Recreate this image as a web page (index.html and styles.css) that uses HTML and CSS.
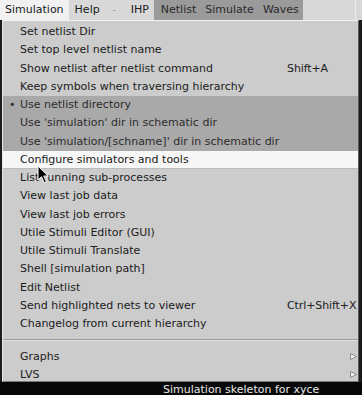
FILE: index.html
```html
<!DOCTYPE html>
<html lang="en">
<head>
    <meta charset="UTF-8">
    <title>Simulation menu</title>
    <link rel="stylesheet" href="styles.css">
</head>
<body>
    <div class="menubar">
        <span class="mb-item active">Simulation</span>
        <span class="mb-item help">Help</span>
        <span class="mb-item dash">-</span>
        <span class="mb-item ihp">IHP</span>
        <div class="mb-group">
            <span class="mb-item">Netlist</span>
            <span class="mb-item">Simulate</span>
            <span class="mb-item">Waves</span>
        </div>
        <div class="mb-rest"></div>
    </div>

    <div class="dropdown">
        <div class="row"><span class="lead"></span><span>Set netlist Dir</span><span></span></div>
        <div class="row"><span class="lead"></span><span>Set top level netlist name</span><span></span></div>
        <div class="row"><span class="lead"></span><span>Show netlist after netlist command</span><span class="acc">Shift+A</span></div>
        <div class="row"><span class="lead"></span><span>Keep symbols when traversing hierarchy</span><span></span></div>
        <div class="row dim"><span class="lead">•</span><span>Use netlist directory</span><span></span></div>
        <div class="row dim"><span class="lead"></span><span>Use 'simulation' dir in schematic dir</span><span></span></div>
        <div class="row dim"><span class="lead"></span><span>Use 'simulation/[schname]' dir in schematic dir</span><span></span></div>
        <div class="row hover"><span class="lead"></span><span>Configure simulators and tools</span><span></span></div>
        <div class="row"><span class="lead"></span><span>List running sub-processes</span><span></span></div>
        <div class="row"><span class="lead"></span><span>View last job data</span><span></span></div>
        <div class="row"><span class="lead"></span><span>View last job errors</span><span></span></div>
        <div class="row"><span class="lead"></span><span>Utile Stimuli Editor (GUI)</span><span></span></div>
        <div class="row"><span class="lead"></span><span>Utile Stimuli Translate</span><span></span></div>
        <div class="row"><span class="lead"></span><span>Shell [simulation path]</span><span></span></div>
        <div class="row"><span class="lead"></span><span>Edit Netlist</span><span></span></div>
        <div class="row"><span class="lead"></span><span>Send highlighted nets to viewer</span><span class="acc">Ctrl+Shift+X</span></div>
        <div class="row"><span class="lead"></span><span>Changelog from current hierarchy</span><span></span></div>
        <div class="separator"></div>
        <div class="row"><span class="lead"></span><span>Graphs</span><span class="cascade"><svg width="7" height="7" viewBox="0 0 7 7"><polygon points="0.5,0.5 6.5,3.5 0.5,6.5" fill="#f2f2f2" stroke="#8a8a8a" stroke-width="1"/></svg></span></div>
        <div class="row"><span class="lead"></span><span>LVS</span><span class="cascade"><svg width="7" height="7" viewBox="0 0 7 7"><polygon points="0.5,0.5 6.5,3.5 0.5,6.5" fill="#f2f2f2" stroke="#8a8a8a" stroke-width="1"/></svg></span></div>
    </div>

    <div class="statusbar">Simulation skeleton for xyce</div>

    <svg class="pointer" width="13" height="19" viewBox="0 0 13 19">
        <path d="M1,1 L1,15 L4.5,11.8 L7.2,17.8 L9.4,16.8 L6.8,11 L11.2,11 Z" fill="#000" stroke="#fff" stroke-width="1"/>
    </svg>
</body>
</html>
```

FILE: styles.css
```css
body {
    margin: 0;
    padding: 0;
    width: 362px;
    height: 395px;
    overflow: hidden;
    position: relative;
    background-color: #1c1c1c;
    font-family: 'DejaVu Sans', sans-serif;
    font-size: 11px;
    color: #202020;
}

.menubar {
    display: flex;
    height: 20px;
    line-height: 20px;
    background-color: #d8d8d8;
}

.mb-item {
    padding: 0 4.5px;
    white-space: nowrap;
}

.mb-item.active {
    padding: 0 5px;
    background-color: #f1f1f1;
}

.mb-item.help {
    padding-left: 6px;
}

.mb-item.dash {
    padding-left: 8px;
    color: #a0a0a0;
}

.mb-item.ihp {
    padding-left: 10px;
    padding-right: 5px;
}

.mb-group {
    display: flex;
    padding-left: 2.5px;
    background-color: #9a9a9a;
    color: #2a2a2a;
}

.mb-rest {
    flex: 1;
    border-right: 1px solid #ececec;
    margin-right: 6px;
    box-shadow: 6px 0 0 #d8d8d8;
}

.dropdown {
    margin-left: 2px;
    width: 357px;
    height: 362px;
    padding-top: 2px;
    box-sizing: border-box;
    background-color: #cccccc;
    border-top: 1px solid #f2f2f2;
    border-left: 1px solid #e6e6e6;
    border-right: 1px solid #5a5a5a;
    border-bottom: 1px solid #7a7a7a;
}

.row {
    display: grid;
    grid-template-columns: 17px 267px 1fr;
    height: 18.25px;
    line-height: 18.25px;
    white-space: nowrap;
}

.row .lead {
    padding-left: 6px;
}

.row.dim {
    background-color: #a9a9a9;
    color: #2c2c2c;
}

.row.hover {
    background-color: #f7f7f7;
    box-shadow: inset 0 -1px 0 #bdbdbd;
}

.acc {
    color: #202020;
    letter-spacing: -0.1px;
}

.cascade {
    display: flex;
    justify-content: flex-end;
    align-items: center;
    padding-right: 1px;
}

.separator {
    height: 14.25px;
    display: flex;
    align-items: center;
}

.separator::before {
    content: "";
    flex: 1;
    height: 0;
    border-top: 1px solid #9c9c9c;
    border-bottom: 1px solid #e2e2e2;
}

.statusbar {
    height: 13px;
    padding-left: 163px;
    line-height: 15px;
    color: #e8e8e8;
    background-color: #080808;
    white-space: nowrap;
}

.pointer {
    position: absolute;
    left: 37px;
    top: 165px;
}
```
